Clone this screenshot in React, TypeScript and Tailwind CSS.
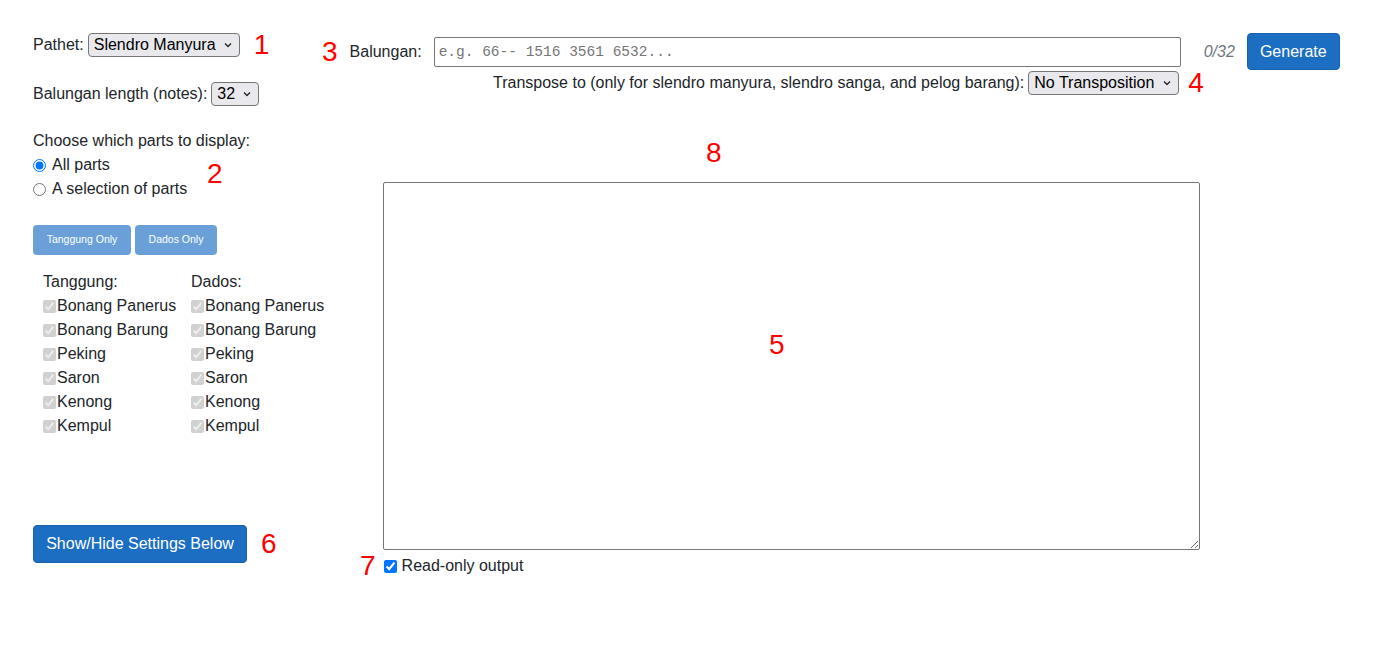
import { useState } from "react";

const parts = ["Bonang Panerus", "Bonang Barung", "Peking", "Saron", "Kenong", "Kempul"];

function Mark({ children, className = "" }: { children: React.ReactNode; className?: string }) {
  return <span className={`text-[28px] leading-[32px] text-[#ff0000] ${className}`}>{children}</span>;
}

function Chevron() {
  return (
    <svg
      className="pointer-events-none absolute right-[8px] top-1/2 -translate-y-1/2"
      width="8"
      height="5"
      viewBox="0 0 8 5"
      fill="none"
    >
      <path d="M1 1l3 3 3-3" stroke="#222" strokeWidth="1.3" />
    </svg>
  );
}

function Select({ value, width, options }: { value: string; width: string; options: string[] }) {
  return (
    <div className={`relative h-[24px] shrink-0 ${width}`}>
      <select
        defaultValue={value}
        className="h-full w-full appearance-none rounded-[4px] border border-[#767676] bg-[#e9e9ed] pl-[5px] pr-[20px] text-[16px] leading-[20px] text-black"
      >
        {options.map((o) => (
          <option key={o}>{o}</option>
        ))}
      </select>
      <Chevron />
    </div>
  );
}

function PartList({ title }: { title: string }) {
  return (
    <div className="whitespace-nowrap">
      <div>{title}</div>
      {parts.map((p) => (
        <label key={p} className="flex h-[24px] items-center">
          <input type="checkbox" checked disabled readOnly className="h-[13px] w-[13px]" />
          <span className="ml-[1px]">{p}</span>
        </label>
      ))}
    </div>
  );
}

export default function App() {
  const [mode, setMode] = useState("all");

  return (
    <div className="flex h-[664px] w-[1396px] bg-white font-['Liberation_Sans',Arial,sans-serif] text-[16px] text-[#212529]">
      {/* Left settings column */}
      <div className="relative flex w-[322px] shrink-0 flex-col pl-[33px]">
        <div className="mt-[33px] flex h-[24px] items-center whitespace-nowrap">
          <span>Pathet:</span>
          <div className="ml-[4px]">
            <Select value="Slendro Manyura" width="w-[152px]" options={["Slendro Manyura", "Slendro Sanga", "Slendro Nem", "Pelog Barang", "Pelog Lima", "Pelog Nem"]} />
          </div>
          <Mark className="ml-[14px]">1</Mark>
        </div>

        <div className="mt-[25px] flex h-[23px] items-center whitespace-nowrap">
          <span>Balungan length (notes):</span>
          <div className="ml-[4px]">
            <Select value="32" width="w-[48px]" options={["8", "16", "32", "64"]} />
          </div>
        </div>

        <div className="mt-[24px] leading-[24px]">Choose which parts to display:</div>
        <label className="flex h-[24px] items-center gap-[6px]">
          <input type="radio" name="mode" checked={mode === "all"} onChange={() => setMode("all")} className="h-[13px] w-[13px]" />
          All parts
        </label>
        <label className="flex h-[24px] items-center gap-[6px]">
          <input type="radio" name="mode" checked={mode === "sel"} onChange={() => setMode("sel")} className="h-[13px] w-[13px]" />
          A selection of parts
        </label>
        <Mark className="absolute left-[207px] top-[158px]">2</Mark>

        <div className="mt-[24px] flex gap-[4px]">
          <button disabled className="h-[30px] w-[98px] rounded-[4px] bg-[#1b6ec2] text-[10.5px] text-white opacity-65">
            Tanggung Only
          </button>
          <button disabled className="h-[30px] w-[82px] rounded-[4px] bg-[#1b6ec2] text-[10.5px] text-white opacity-65">
            Dados Only
          </button>
        </div>

        <div className="ml-[10px] mt-[15px] grid grid-cols-[148px_auto] leading-[24px]">
          <PartList title="Tanggung:" />
          <PartList title="Dados:" />
        </div>

        <div className="mt-[87px] flex items-center">
          <button className="h-[38px] w-[214px] rounded-[4px] border border-[#1861ac] bg-[#1b6ec2] text-[16px] text-white">
            Show/Hide Settings Below
          </button>
          <Mark className="ml-[14px]">6</Mark>
        </div>
      </div>

      {/* Right main column */}
      <div className="flex min-w-0 flex-1 flex-col pr-[55px]">
        <div className="mt-[33px] flex h-[37px] items-center whitespace-nowrap">
          <Mark>3</Mark>
          <span className="ml-[12px]">Balungan:</span>
          <input
            type="text"
            placeholder="e.g. 66-- 1516 3561 6532..."
            className="ml-[12px] h-[30px] w-[747px] shrink-0 rounded-[2px] border border-[#767676] px-[4px] font-['Liberation_Mono',monospace] text-[14.5px] text-black placeholder:text-[#757575]"
          />
          <span className="ml-[23px] italic text-[#6c757d]">0/32</span>
          <button className="ml-[12px] h-[37px] w-[93px] shrink-0 rounded-[4px] border border-[#1861ac] bg-[#1b6ec2] text-white">
            Generate
          </button>
        </div>

        <div className="mt-[1px] flex h-[24px] items-center whitespace-nowrap pl-[171px]">
          <span>Transpose to (only for slendro manyura, slendro sanga, and pelog barang):</span>
          <div className="ml-[4px]">
            <Select value="No Transposition" width="w-[151px]" options={["No Transposition", "Slendro Sanga", "Pelog Barang"]} />
          </div>
          <Mark className="ml-[9px]">4</Mark>
        </div>

        <Mark className="ml-[384px] mt-[42px]">8</Mark>

        <div className="relative ml-[61px] mt-[13px] h-[368px] w-[817px]">
          <textarea readOnly className="h-full w-full rounded-[2px] border border-[#767676] p-[4px]" />
          <Mark className="pointer-events-none absolute left-[386px] top-[147px]">5</Mark>
        </div>

        <div className="ml-[38px] flex h-[32px] items-center">
          <Mark>7</Mark>
          <label className="ml-[8px] flex items-center gap-[5px]">
            <input type="checkbox" defaultChecked className="h-[13px] w-[13px]" />
            Read-only output
          </label>
        </div>
      </div>
    </div>
  );
}
